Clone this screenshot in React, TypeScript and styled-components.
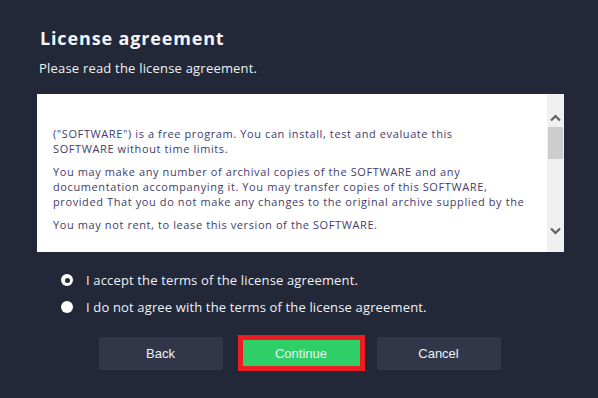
import React from "react";
import styled, { createGlobalStyle } from "styled-components";

const Global = createGlobalStyle`
  html, body { margin: 0; padding: 0; background: #232838; }
  #root { width: 598px; height: 398px; }
`;

const Page = styled.div`
  box-sizing: border-box;
  width: 598px;
  height: 398px;
  background: #232838;
  padding: 25px 34px 0 37px;
  display: flex;
  flex-direction: column;
  font-family: "Open Sans", "Noto Sans", sans-serif;
  color: #ffffff;
`;

const Title = styled.h1`
  margin: 0 0 0 3px;
  font-size: 18px;
  line-height: 26px;
  font-weight: 700;
  letter-spacing: 0.85px;
  color: #f4f5f7;
`;

const Subtitle = styled.p`
  margin: 8px 0 0 2px;
  font-size: 13px;
  line-height: 18px;
  letter-spacing: 0.2px;
  color: #eef1f6;
`;

const LicenseBox = styled.div`
  margin-top: 17px;
  height: 158px;
  background: #ffffff;
  display: flex;
`;

const LicenseText = styled.div`
  flex: 1;
  overflow: hidden;
  padding: 32px 12px 0 16px;
  font-family: "Open Sans", "Noto Sans", sans-serif;
  font-size: 11px;
  line-height: 15px;
  letter-spacing: 0.6px;
  color: #3f3c6b;
`;

const Para = styled.p`
  margin: 0 0 8px 0;
  white-space: nowrap;
`;

const Scrollbar = styled.div`
  width: 17px;
  background: #f0f0f0;
  display: flex;
  flex-direction: column;
  align-items: center;
`;

const ArrowBtn = styled.div`
  height: 17px;
  width: 17px;
  display: flex;
  align-items: center;
  justify-content: center;
`;

const Thumb = styled.div`
  width: 15px;
  height: 32px;
  background: #cdcdcd;
`;

const Track = styled.div`
  flex: 1;
  display: flex;
  flex-direction: column;
  align-items: center;
`;

const RadioGroup = styled.div`
  margin-top: 19px;
  padding-left: 24px;
  display: flex;
  flex-direction: column;
  gap: 9px;
`;

const RadioRow = styled.label`
  display: flex;
  align-items: center;
  gap: 13px;
  font-size: 13px;
  line-height: 18px;
  letter-spacing: 0.15px;
  color: #eef1f6;
`;

const RadioDot = styled.span<{ $checked: boolean }>`
  box-sizing: border-box;
  width: 12px;
  height: 12px;
  border-radius: 50%;
  background: #ffffff;
  display: flex;
  align-items: center;
  justify-content: center;
  &::after {
    content: "";
    width: 5px;
    height: 5px;
    border-radius: 50%;
    background: ${(p) => (p.$checked ? "#232838" : "transparent")};
  }
`;

const ButtonRow = styled.div`
  margin: 19px 0 0 -2px;
  display: flex;
  align-items: center;
  justify-content: center;
  gap: 12px;
`;

const Button = styled.button<{ $primary?: boolean }>`
  box-sizing: border-box;
  font-family: "Liberation Sans", Arial, sans-serif;
  font-size: 13px;
  color: #eef1f8;
  cursor: pointer;
  width: ${(p) => (p.$primary ? "127px" : "124px")};
  height: ${(p) => (p.$primary ? "36px" : "33px")};
  border-radius: ${(p) => (p.$primary ? "0" : "2px")};
  background: ${(p) => (p.$primary ? "#2ecf66" : "#313748")};
  border: ${(p) => (p.$primary ? "5px solid #ec1c24" : "none")};
  margin-left: ${(p) => (p.$primary ? "3px" : "0")};
  padding: 0;
`;

const Chevron = ({ up }: { up?: boolean }) => (
  <svg width="11" height="8" viewBox="0 0 11 8">
    <path
      d={up ? "M1 6.5 L5.5 2 L10 6.5" : "M1 1.5 L5.5 6 L10 1.5"}
      fill="none"
      stroke="#5f5f5f"
      strokeWidth="2.2"
    />
  </svg>
);

export default function App() {
  return (
    <>
      <Global />
      <Page>
        <Title>License agreement</Title>
        <Subtitle>Please read the license agreement.</Subtitle>
        <LicenseBox>
          <LicenseText>
            <Para>
              ("SOFTWARE") is a free program. You can install, test and evaluate this
              <br />
              SOFTWARE without time limits.
            </Para>
            <Para>
              You may make any number of archival copies of the SOFTWARE and any
              <br />
              documentation accompanying it. You may transfer copies of this SOFTWARE,
              <br />
              provided That you do not make any changes to the original archive supplied by the
            </Para>
            <Para>You may not rent, to lease this version of the SOFTWARE.</Para>
          </LicenseText>
          <Scrollbar>
            <ArrowBtn style={{ marginTop: 15 }}>
              <Chevron up />
            </ArrowBtn>
            <Track>
              <Thumb style={{ marginTop: 1 }} />
            </Track>
            <ArrowBtn style={{ marginBottom: 13 }}>
              <Chevron />
            </ArrowBtn>
          </Scrollbar>
        </LicenseBox>
        <RadioGroup>
          <RadioRow>
            <RadioDot $checked />
            I accept the terms of the license agreement.
          </RadioRow>
          <RadioRow>
            <RadioDot $checked={false} />
            I do not agree with the terms of the license agreement.
          </RadioRow>
        </RadioGroup>
        <ButtonRow>
          <Button>Back</Button>
          <Button $primary>Continue</Button>
          <Button>Cancel</Button>
        </ButtonRow>
      </Page>
    </>
  );
}
